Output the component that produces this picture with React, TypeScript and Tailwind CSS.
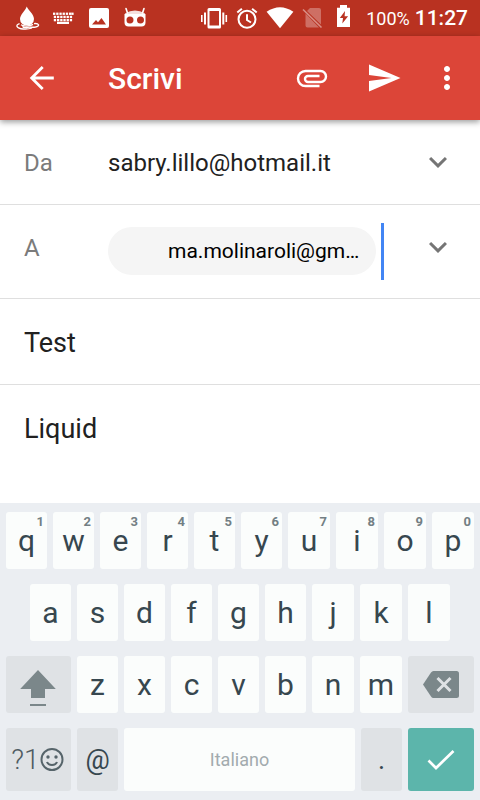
import type { ReactNode } from "react";

function StatusIcon({ size, children }: { size: "small" | "large"; children: ReactNode }) {
  return size === "small" ? (
    <svg className="size-6 shrink-0" viewBox="0 0 24 24" fill="white" aria-hidden="true">
      {children}
    </svg>
  ) : (
    <svg className="size-7 shrink-0" viewBox="0 0 28 28" fill="white" aria-hidden="true">
      {children}
    </svg>
  );
}

const keyboardRows = [
  { y: 6.6, xs: [1, 4.2, 7.4, 10.6, 13.8, 17, 19.3] },
  { y: 9.8, xs: [1.8, 5, 8.2, 11.4, 14.6, 17.8] },
  { y: 13, xs: [1.8, 5, 8.2, 11.4, 14.6, 17.8] },
];

function StatusBar() {
  return (
    <div className="flex h-9 items-center justify-between bg-[#b93221] pl-4 pr-3 text-white">
      <div className="flex items-center gap-3">
        <StatusIcon size="small">
          <path d="M10.700 0.400C12 4 18 7.800 18 13a7 6.600 0 0 1-14 0C4 8.500 9.300 5 10.700 0.400Z" />
          <path
            d="M3.600 17.600C-1 19 .5 22.600 7 23c4 .3 7-.2 9-1M18 17.600c5-.5 6.500 2.200 1.500 3.400-3 .6-5.500-.2-8 .4-2 .3-4.500 0-5-1"
            fill="none"
            stroke="white"
            strokeWidth="1.300"
          />
          <path d="M5 18.800c2 1.700 9 1.700 12-.4" fill="none" stroke="white" strokeWidth="1.300" />
        </StatusIcon>
        <StatusIcon size="small">
          {keyboardRows.map((row) =>
            row.xs.map((x) => <rect key={`${row.y}-${x}`} x={x} y={row.y} width="2.300" height="2.300" />),
          )}
          <rect x="5" y="15.800" width="12" height="2.200" />
        </StatusIcon>
        <StatusIcon size="small">
          <path
            fillRule="evenodd"
            d="M3 2h16a2 2 0 0 1 2 2v16a2 2 0 0 1-2 2H3a2 2 0 0 1-2-2V4a2 2 0 0 1 2-2ZM4 18.500h14l-4.500-6.500-3.500 4.300L8 14Z"
          />
        </StatusIcon>
        <StatusIcon size="small">
          <path d="M2 2.500 3.500 7M20 2.500 18.500 7" stroke="white" strokeWidth="1.600" strokeLinecap="round" />
          <path d="M1 7.600Q11 1.500 21 7.600v1H1Z" opacity="0.85" />
          <path
            fillRule="evenodd"
            d="M.5 8h21v8.500q0 4-4 4h-13q-4 0-4-4ZM6 10.500a3.500 3.500 0 1 0 0 7 3.500 3.500 0 0 0 0-7Zm10.500 0a3.500 3.500 0 1 0 0 7 3.500 3.500 0 0 0 0-7Z"
          />
        </StatusIcon>
      </div>
      <div className="flex items-center">
        <div className="flex items-center gap-[5px]">
          <StatusIcon size="large">
            <path
              fillRule="evenodd"
              d="M9 4h10.500a1.500 1.500 0 0 1 1.500 1.500v17.500a1.500 1.500 0 0 1-1.500 1.500H9A1.500 1.500 0 0 1 7.500 23V5.500A1.500 1.500 0 0 1 9 4Zm.500 3v14.500H19V7Z"
            />
            <path d="M1 11h1.600v7H1zM4 8.500h2v12H4zM22.300 8.500h2v12h-2zM25.500 11h1.600v7h-1.600z" />
          </StatusIcon>
          <StatusIcon size="large">
            <g fill="none" stroke="white" strokeWidth="2">
              <circle cx="14" cy="15.300" r="8.500" />
              <path d="M4.300 8.600 8.900 4.700M23.700 8.600l-4.600-3.900M14 10.300v5.700l4 2.500" />
            </g>
          </StatusIcon>
          <StatusIcon size="large">
            <path d="M.600 7.800Q14 -1.400 27.400 7.800L14 24.200Z" />
          </StatusIcon>
          <StatusIcon size="large">
            <path opacity="0.3" d="M11 4h9q2 0 2 2v14.500L8 7ZM6.500 9.500 20 23.500H8.500q-2 0-2-2Z" />
            <path opacity="0.45" d="M4 5.500 22.500 23.500" stroke="white" strokeWidth="1.600" />
          </StatusIcon>
          <StatusIcon size="large">
            <path
              fillRule="evenodd"
              d="M8 1h7v2.800H18V23H5V3.800h3ZM13 7 7.800 14H11l-.7 5.500 5.800-7.300h-3.500Z"
            />
          </StatusIcon>
        </div>
        <span className="ml-[6px] pt-[2px] text-lg">100%</span>
        <span className="ml-[5px] pt-[2px] text-[21px] font-medium">11:27</span>
      </div>
    </div>
  );
}

function MaterialIcon({ path }: { path: string }) {
  return (
    <svg className="size-9 shrink-0" viewBox="0 0 24 24" fill="currentColor" aria-hidden="true">
      <path d={path} />
    </svg>
  );
}

function LineIcon({ path, width }: { path: string; width: number }) {
  return (
    <svg
      className="size-9 shrink-0"
      viewBox="0 0 36 36"
      fill="none"
      stroke="currentColor"
      strokeWidth={width}
      aria-hidden="true"
    >
      <path d={path} />
    </svg>
  );
}

const BACK = "M29.800 18H8M18.700 7 7.700 18l11 11";
const ATTACH = "M25.500 26H11.500a7.500 7.500 0 0 1 0-15H26.500a5.500 5.500 0 0 1 0 11H14a3 3 0 0 1 0-6H25.500";
const SEND = "M2.010 21L23 12 2.010 3 2 10l15 2-15 2z";
const MORE =
  "M12 8c1.100 0 2-.9 2-2s-.9-2-2-2-2 .9-2 2 .9 2 2 2zm0 2c-1.100 0-2 .9-2 2s.9 2 2 2 2-.9 2-2-.9-2-2-2zm0 6c-1.100 0-2 .9-2 2s.9 2 2 2 2-.9 2-2-.9-2-2-2z";
const EXPAND = "M16.590 8.590L12 13.170 7.410 8.590 6 10l6 6 6-6z";

function AppBar() {
  return (
    <header className="relative flex h-[84px] items-center bg-[#dc4538] pr-[6px] text-white shadow-[0_2px_6px_rgba(0,0,0,0.4)]">
      <button type="button" aria-label="Indietro" className="flex h-full w-[84px] items-center justify-center">
        <LineIcon path={BACK} width={2.8} />
      </button>
      <h1 className="flex-1 pl-6 pt-[2px] text-[30px] font-medium leading-9">Scrivi</h1>
      <button type="button" aria-label="Allega" className="flex h-full w-[72px] items-center justify-center">
        <LineIcon path={ATTACH} width={2.4} />
      </button>
      <button type="button" aria-label="Invia" className="flex h-full w-[72px] items-center justify-center">
        <MaterialIcon path={SEND} />
      </button>
      <button type="button" aria-label="Altro" className="flex h-full w-[54px] items-center justify-center">
        <MaterialIcon path={MORE} />
      </button>
    </header>
  );
}

function ComposeForm() {
  return (
    <form className="flex flex-1 flex-col bg-white text-[#212121]">
      <div className="flex h-[85px] items-center border-b border-[#dfdfdf] px-6">
        <label htmlFor="from" className="w-[84px] shrink-0 pt-[2px] text-2xl text-[#7b7b7b]">
          Da
        </label>
        <select id="from" className="min-w-0 flex-1 appearance-none bg-transparent pt-[2px] text-2xl outline-none">
          <option>sabry.lillo@hotmail.it</option>
        </select>
        <span className="pointer-events-none text-[#757575]">
          <MaterialIcon path={EXPAND} />
        </span>
      </div>
      <div className="flex items-start border-b border-[#dfdfdf] px-6 py-[18px]">
        <label htmlFor="to" className="w-[84px] shrink-0 pt-[2px] text-2xl leading-[46px] text-[#7b7b7b]">
          A
        </label>
        <div className="flex min-w-0 flex-1 items-start">
          <button
            type="button"
            className="mt-1 h-12 w-[268px] min-w-0 truncate rounded-full bg-[#f5f5f5] pl-[60px] pr-4 pt-[2px] text-left text-[21px] text-black"
          >
            ma.molinaroli@gm…
          </button>
          <span className="ml-[5px] h-[57px] w-[3px] shrink-0 bg-[#4285f4]" />
          <input id="to" className="h-[57px] w-0 min-w-0 flex-1 bg-transparent text-[21px] outline-none" />
        </div>
        <button type="button" aria-label="Aggiungi Cc/Ccn" className="flex h-12 items-center text-[#757575]">
          <MaterialIcon path={EXPAND} />
        </button>
      </div>
      <input
        aria-label="Oggetto"
        defaultValue="Test"
        className="h-[86px] border-b border-[#dfdfdf] px-6 pt-[2px] text-[27px] outline-none"
      />
      <textarea
        aria-label="Messaggio"
        defaultValue="Liquid"
        className="flex-1 resize-none px-6 pt-[26px] text-[27px] leading-9 outline-none"
      />
    </form>
  );
}

function LetterKey({ letter, hint, wide }: { letter: string; hint?: string; wide?: boolean }) {
  return (
    <button
      type="button"
      className={`relative flex h-[57px] min-w-0 basis-0 items-center justify-center rounded-[3px] bg-[#fbfdfc] text-[30px] text-[#37474f] ${
        wide ? "grow-[42]" : "grow-[41]"
      }`}
    >
      {letter}
      {hint && <span className="absolute right-[3px] top-[2px] text-[13px] font-bold leading-4 text-[#737f84]">{hint}</span>}
    </button>
  );
}

function Keyboard() {
  return (
    <div className="flex flex-col gap-[15px] bg-[#ebeef2] px-[6px] py-[9px]">
      <div className="flex gap-[6px]">
        {[..."qwertyuiop"].map((letter, i) => (
          <LetterKey key={letter} letter={letter} hint={String((i + 1) % 10)} wide={i > 5} />
        ))}
      </div>
      <div className="flex gap-[6px] px-6">
        {[..."asdfghjkl"].map((letter, i) => (
          <LetterKey key={letter} letter={letter} wide={i > 5} />
        ))}
      </div>
      <div className="flex gap-[6px]">
        <button
          type="button"
          aria-label="Maiuscole"
          className="flex min-w-0 grow-[65] basis-0 items-center justify-center rounded-[3px] bg-[#dfe2e5]"
        >
          <svg className="h-[43px] w-[37px]" viewBox="0 0 37 43" fill="#7b878a" aria-hidden="true">
            <path d="M18 7 35.800 26H25V35H11V26H.2Z" />
            <path d="M10 41h16v2H10z" />
          </svg>
        </button>
        {[..."zxcvbnm"].map((letter, i) => (
          <LetterKey key={letter} letter={letter} wide={i > 4} />
        ))}
        <button
          type="button"
          aria-label="Cancella"
          className="flex min-w-0 grow-[66] basis-0 items-center justify-center rounded-[3px] bg-[#dfe2e5]"
        >
          <svg className="h-7 w-9" viewBox="0 0 36 28" aria-hidden="true">
            <path d="M10.500 0H33.500Q36 0 36 2.500V24.500Q36 27 33.500 27H10.500Q9 27 8 25.500L0 13.500 8 1.500Q9 0 10.500 0Z" fill="#7b878a" />
            <path d="m14.500 7 13 13m0-13-13 13" stroke="#dfe2e5" strokeWidth="3" />
          </svg>
        </button>
      </div>
      <div className="flex h-[63px] gap-[6px]">
        <button
          type="button"
          aria-label="Simboli ed emoji"
          className="flex min-w-0 grow-[65] basis-0 items-center justify-center rounded-[3px] bg-[#dfe2e5] text-[28px] font-light text-[#4f5c62]"
        >
          ?1
          <svg
            className="mr-[2px] size-6 shrink-0"
            viewBox="0 0 24 24"
            fill="none"
            stroke="#56646a"
            strokeWidth="2"
            aria-hidden="true"
          >
            <circle cx="12" cy="11.500" r="10.500" />
            <path d="M7 14c1.500 4 8.500 4 10 0" />
            <circle cx="8" cy="9" r="1.700" fill="#56646a" stroke="none" />
            <circle cx="16" cy="9" r="1.700" fill="#56646a" stroke="none" />
          </svg>
        </button>
        <button
          type="button"
          className="min-w-0 grow-[41] basis-0 rounded-[3px] bg-[#dfe2e5] pt-[2px] text-[27px] text-[#37474f]"
        >
          @
        </button>
        <button
          type="button"
          className="min-w-0 grow-[231] basis-0 rounded-[3px] bg-[#fbfdfc] text-lg text-[#a2abae]"
        >
          Italiano
        </button>
        <button
          type="button"
          className="min-w-0 grow-[41] basis-0 rounded-[3px] bg-[#dfe2e5] pt-[2px] text-[27px] text-[#37474f]"
        >
          .
        </button>
        <button
          type="button"
          aria-label="Fine"
          className="flex min-w-0 grow-[66] basis-0 items-center justify-center rounded-[3px] bg-[#5cb5ab]"
        >
          <svg className="h-5 w-7" viewBox="0 0 28 20" fill="none" stroke="white" strokeWidth="2.700" aria-hidden="true">
            <path d="m1.500 10.500 7.500 7.500L26.500 1" />
          </svg>
        </button>
      </div>
    </div>
  );
}

export default function App() {
  return (
    <div className="flex min-h-screen flex-col bg-white font-['Roboto','Noto_Sans',sans-serif]">
      <StatusBar />
      <AppBar />
      <ComposeForm />
      <Keyboard />
    </div>
  );
}
